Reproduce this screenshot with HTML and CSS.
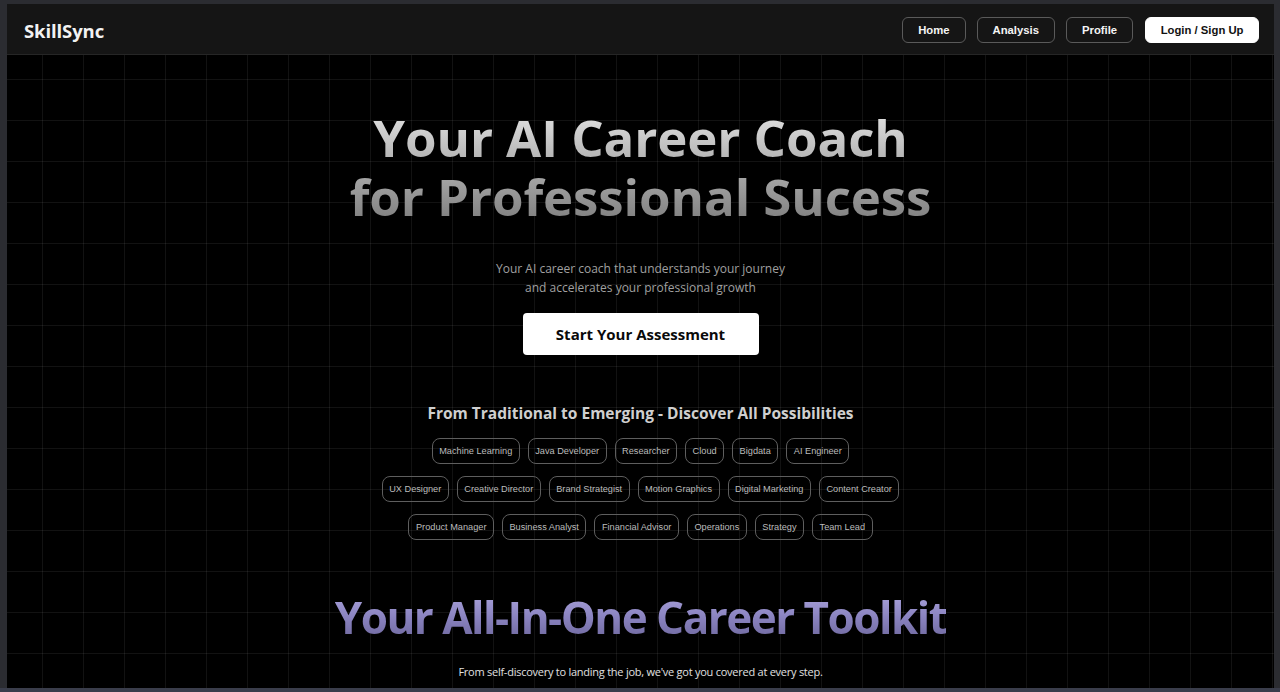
FILE: index.html
```html
<!DOCTYPE html>
<html lang="en">
<head>
<meta charset="utf-8">
<title>SkillSync</title>
<link rel="stylesheet" href="styles.css">
</head>
<body>
<div class="page">
  <header class="nav">
    <div class="logo">SkillSync</div>
    <nav class="links">
      <a class="btn">Home</a>
      <a class="btn">Analysis</a>
      <a class="btn">Profile</a>
      <a class="btn btn-light">Login / Sign Up</a>
    </nav>
  </header>
  <main class="main">
    <h1 class="hero-title"><span class="line">Your AI Career Coach</span><span class="line">for Professional Sucess</span></h1>
    <p class="hero-sub">Your AI career coach that understands your journey<br>and accelerates your professional growth</p>
    <a class="cta">Start Your Assessment</a>
    <h2 class="disc">From Traditional to Emerging - Discover All Possibilities</h2>
    <div class="tags">
      <div class="tag-row">
        <span class="tag">Machine Learning</span>
        <span class="tag">Java Developer</span>
        <span class="tag">Researcher</span>
        <span class="tag">Cloud</span>
        <span class="tag">Bigdata</span>
        <span class="tag">AI Engineer</span>
      </div>
      <div class="tag-row">
        <span class="tag">UX Designer</span>
        <span class="tag">Creative Director</span>
        <span class="tag">Brand Strategist</span>
        <span class="tag">Motion Graphics</span>
        <span class="tag">Digital Marketing</span>
        <span class="tag">Content Creator</span>
      </div>
      <div class="tag-row">
        <span class="tag">Product Manager</span>
        <span class="tag">Business Analyst</span>
        <span class="tag">Financial Advisor</span>
        <span class="tag">Operations</span>
        <span class="tag">Strategy</span>
        <span class="tag">Team Lead</span>
      </div>
    </div>
    <h2 class="toolkit">Your All-In-One Career Toolkit</h2>
    <p class="toolkit-sub">From self-discovery to landing the job, we've got you covered at every step.</p>
  </main>
</div>
</body>
</html>
```

FILE: styles.css
```css
html, body {
  margin: 0;
  padding: 0;
}
body {
  width: 1280px;
  height: 692px;
  box-sizing: border-box;
  background: #2b2c31;
  padding: 4px 6px 0 7px;
  border-bottom: 4px solid #3a3d4b;
  overflow: hidden;
  font-family: "Open Sans", "Noto Sans", sans-serif;
}
.page {
  height: 684px;
  display: flex;
  flex-direction: column;
  overflow: hidden;
}
.nav {
  height: 51px;
  box-sizing: border-box;
  background: #151515;
  border-bottom: 1px solid #262626;
  display: flex;
  align-items: center;
  justify-content: space-between;
  padding: 0 15px 0 17px;
  flex-shrink: 0;
}
.logo {
  color: #f2f2f2;
  font-family: "Open Sans", sans-serif;
  font-weight: 700;
  font-size: 18.5px;
  letter-spacing: -0.1px;
  margin-top: 2px;
}
.links {
  display: flex;
  gap: 11px;
  margin-top: 1px;
}
.btn {
  display: flex;
  align-items: center;
  justify-content: center;
  height: 26px;
  box-sizing: border-box;
  padding: 0 15px;
  border: 1px solid #5a5a5a;
  border-radius: 6px;
  color: #f4f4f4;
  font-family: "Liberation Sans", Arial, sans-serif;
  font-weight: 700;
  font-size: 11.3px;
}
.btn-light {
  background: #ffffff;
  color: #111;
  border-color: #ffffff;
  padding: 0 14.5px;
  margin-left: 1px;
}
.main {
  flex: 1;
  background-color: #000;
  background-image:
    linear-gradient(to right, rgba(255,255,255,0.07) 1px, transparent 1px),
    linear-gradient(to bottom, rgba(255,255,255,0.07) 1px, transparent 1px);
  background-size: 41px 41px;
  background-position: 35px 24px;
  display: flex;
  flex-direction: column;
  align-items: center;
  text-align: center;
  padding-top: 53px;
}
.hero-title {
  margin: 0;
  font-family: "Open Sans", sans-serif;
  font-weight: 700;
  font-size: 51px;
  letter-spacing: -0.1px;
  background: linear-gradient(to bottom, #e6e6e6 0%, #adadad 50%, #7c7c7c 100%);
  -webkit-background-clip: text;
  background-clip: text;
  color: transparent;
}
.line {
  display: block;
  height: 59px;
  line-height: 59px;
}
.hero-sub {
  margin: 33px 0 0;
  color: #a0a0a0;
  font-size: 12px;
  line-height: 19px;
}
.cta {
  margin-top: 16px;
  width: 236px;
  height: 42px;
  box-sizing: border-box;
  background: #fff;
  color: #0a0a0a;
  border-radius: 4px;
  display: flex;
  align-items: center;
  justify-content: center;
  font-weight: 700;
  font-size: 15px;
}
.disc {
  margin: 47px 0 0;
  color: #cfcfcf;
  font-weight: 700;
  font-size: 15.5px;
  line-height: 22px;
}
.tags {
  margin-top: 14px;
  display: flex;
  flex-direction: column;
  align-items: center;
  gap: 12px;
}
.tag-row {
  display: flex;
  gap: 8px;
}
.tag {
  height: 26px;
  box-sizing: border-box;
  padding: 0 6.5px;
  display: flex;
  align-items: center;
  border: 1px solid #5e5e5e;
  border-radius: 8px;
  color: #bcbcbc;
  font-family: "Liberation Sans", Arial, sans-serif;
  font-size: 9.2px;
}
.toolkit {
  margin: 50px 0 0;
  font-family: "Open Sans", sans-serif;
  font-weight: 700;
  font-size: 44px;
  line-height: 54px;
  letter-spacing: -1.5px;
  background: linear-gradient(to bottom, #aea7de 0%, #8a83c0 50%, #6a6498 100%);
  -webkit-background-clip: text;
  background-clip: text;
  color: transparent;
}
.toolkit-sub {
  margin: 20px 0 0;
  color: #e0e0e0;
  font-size: 11px;
  letter-spacing: -0.25px;
  line-height: 16px;
}
```
